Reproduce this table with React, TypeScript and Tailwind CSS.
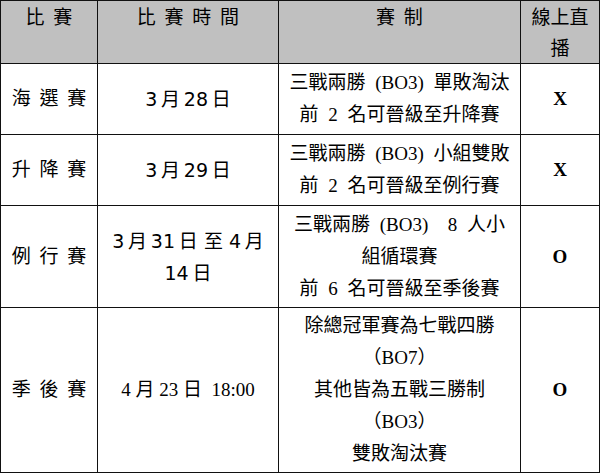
import React from 'react';

const serif = "font-['Liberation_Serif','Noto_Sans_CJK_TC',serif]";
const sans = "font-['DejaVu_Sans','Noto_Sans_CJK_TC',sans-serif]";

interface CellProps {
  children: React.ReactNode;
  head?: boolean;
  font?: string;
  bold?: boolean;
}

const Cell: React.FC<CellProps> = ({ children, head = false, font = serif, bold = false }) => (
  <div
    className={
      'border-r border-b border-[#111] flex flex-col items-center text-center text-[19px] text-black whitespace-nowrap ' +
      (head ? 'justify-start pt-[1px] leading-[31px] bg-[#c0c0c0] ' : 'justify-center leading-[32px] bg-white ') +
      (bold ? 'font-bold ' : '') +
      font
    }
  >
    {children}
  </div>
);

const Lines: React.FC<{ lines: string[]; spacing?: string }> = ({ lines, spacing = '' }) => (
  <>
    {lines.map((l, i) => (
      <div key={i} className={'whitespace-pre ' + spacing}>{l}</div>
    ))}
  </>
);

// thin space between digits and CJK, like Word's auto spacing
const t = '\u2009';

const rows = [
  {
    name: '海 選 賽',
    date: [`3${t}月${t}28${t}日`],
    dateFont: sans,
    format: ['三戰兩勝 (BO3) 單敗淘汰', '前 2 名可晉級至升降賽'],
    live: 'X',
  },
  {
    name: '升 降 賽',
    date: [`3${t}月${t}29${t}日`],
    dateFont: sans,
    format: ['三戰兩勝 (BO3) 小組雙敗', '前 2 名可晉級至例行賽'],
    live: 'X',
  },
  {
    name: '例 行 賽',
    date: [`3${t}月${t}31${t}日 至 4${t}月`, `14${t}日`],
    dateFont: sans,
    format: ['三戰兩勝 (BO3)  8 人小', '組循環賽', '前 6 名可晉級至季後賽'],
    live: 'O',
  },
  {
    name: '季 後 賽',
    date: ['4 月 23 日  18:00'],
    dateFont: serif,
    format: ['除總冠軍賽為七戰四勝', '（BO7）', '其他皆為五戰三勝制', '（BO3）', '雙敗淘汰賽'],
    live: 'O',
  },
];

export default function App() {
  return (
    <div className="w-[600px] h-[474px] bg-white">
      <div className="grid grid-cols-[97px_181px_242px_1fr] grid-rows-[63px_71px_71px_102px_165px] border-l border-t border-[#111] w-[600px]">
        <Cell head><span className="[word-spacing:4px]">比 賽</span></Cell>
        <Cell head><span className="[word-spacing:4px]">比 賽 時 間</span></Cell>
        <Cell head><span className="[word-spacing:4px]">賽 制</span></Cell>
        <Cell head><Lines lines={['線上直', '播']} /></Cell>

        {rows.map((r, i) => (
          <React.Fragment key={i}>
            <Cell><span className="[word-spacing:4px]">{r.name}</span></Cell>
            <Cell font={r.dateFont}><Lines lines={r.date} /></Cell>
            <Cell><Lines lines={r.format} spacing="[word-spacing:5px]" /></Cell>
            <Cell bold>{r.live}</Cell>
          </React.Fragment>
        ))}
      </div>
    </div>
  );
}
